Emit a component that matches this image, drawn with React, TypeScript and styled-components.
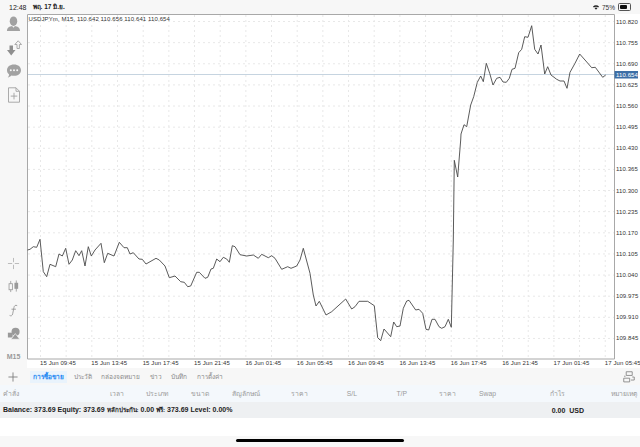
import React from 'react';
import styled, { createGlobalStyle } from 'styled-components';

const GlobalStyle = createGlobalStyle`
    html, body {
        margin: 0;
        padding: 0;
        background: #ffffff;
    }
    body {
        font-family: "Liberation Sans", "Noto Sans", sans-serif;
    }
`

const PRICE_LABELS = ['110.820', '110.755', '110.690', '110.625', '110.560', '110.495', '110.430', '110.365', '110.300', '110.235', '110.170', '110.105', '110.040', '109.975', '109.910', '109.845']
const TIME_LABELS = ['15 Jun 09:45', '15 Jun 13:45', '15 Jun 17:45', '15 Jun 21:45', '16 Jun 01:45', '16 Jun 05:45', '16 Jun 09:45', '16 Jun 13:45', '16 Jun 17:45', '16 Jun 21:45', '17 Jun 01:45', '17 Jun 05:45']
const TABS = ['การซื้อขาย', 'ประวัติ', 'กล่องจดหมาย', 'ข่าว', 'บันทึก', 'การตั้งค่า']
const COLUMNS = ['คำสั่ง', 'เวลา', 'ประเภท', 'ขนาด', 'สัญลักษณ์', 'ราคา', 'S/L', 'T/P', 'ราคา', 'Swap', 'กำไร', 'หมายเหตุ']

// page coordinates, the svg viewBox starts at the chart corner
const LINE = `27.5,250 30,249.3 33.3,246.7 36.7,247.3 40,239.3 43.3,271.7 46.7,276.7 50,264.3 55.7,266.7 59,254 62.3,256 65.7,248.3 69,264.3 72.3,260 75.7,250.7 79,255.7 81.7,250.7 85,266 88.3,246.7 91.3,256 95,250 101,243.3 104.3,262.7 107.7,253.3 114,256 119.3,242.3 124,247.7 127.3,247.7 130,254 133.3,252.7 139,259 142.3,259.3 146,264 156,258.3 159.3,260 165,266 169.3,277.7 175,276 180.7,281.7 184.3,282.3 187.7,286.7 190.7,286 196.7,272.3 199.3,272.3 205,278.3 207.7,277.3 211,269 213.3,268.3 216.7,259 220,261.7 223.3,257.3 226.7,259 229.3,262.3 232.3,245.7 235,246.7 240,254.7 246.7,256 253.3,255 258.3,258.3 261.7,254.3 268.3,257.7 271.7,255.7 275,258.3 281.7,269.3 287.7,266.7 291,268.3 296.7,266 300,260 303.3,248.3 310,273.3 313.3,295 316,306 319.3,301.3 326,315 331.7,311.7 345.7,299 351.7,309 355,306.7 359,301.3 367.7,301.3 374.3,305.7 377.7,337.7 380.7,340.7 384,329 390.7,336.7 393.7,322 396.7,326.7 400,326 403.3,308.3 406.7,301 409,300.3 415.7,310 419,309.3 422.7,313.3 426,329.3 428.7,330 432,319.3 435,319.3 439,326.7 441.7,328.3 445,326.7 448.3,319.3 451.3,327.3 453.3,240 454.3,160.3 457.7,177 460.7,140 461,134 464,124.7 466.7,126.7 470.7,105 473.7,96.7 477.3,82.3 480.7,76 483.3,81.7 486.3,63.3 489.7,73.3 493,85 496.7,78.3 500,77.3 503,82 506.3,82.3 509.3,78.3 512,69.3 515,68.3 518.7,52.7 521.7,49.3 524.7,36.7 528,37.3 531.7,25.7 534.7,49.3 538,54 541,45 544.7,74 547.7,66.7 551,75 556.7,79.3 560,81 564,81 567,88.3 570,72.3 575,63.3 579.7,54 585,60 591.7,67.7 595.3,67.3 602.7,77.3 605.7,75`

const App = () => {
    return (
        <>
            <GlobalStyle />
            <Screen>
                <StatusBar>
                    <StatusLeft>
                        <StatusTime>12:48</StatusTime>
                        <StatusDate>พฤ. 17 มิ.ย.</StatusDate>
                    </StatusLeft>
                    <StatusRight>
                        <svg width="6" height="5" viewBox="0 0 8 6">
                            <path d="M0 1.8 C2.2 -0.4 5.8 -0.4 8 1.8 L6.9 3 C5.3 1.5 2.7 1.5 1.1 3 Z M2 3.8 C3.2 2.8 4.8 2.8 6 3.8 L4 6 Z" fill="#222" />
                        </svg>
                        <span>75%</span>
                        <Battery><BatteryLevel style={{ width: '75%' }} /></Battery>
                    </StatusRight>
                </StatusBar>
                <Workspace>
                    <Sidebar>
                        <SideGroup>
                            <SideIcon>
                                <svg width="15" height="16" viewBox="0 0 16 16">
                                    <ellipse cx="8" cy="5" rx="4" ry="5" fill="#a2a2a2" />
                                    <path d="M1 15.5 C1 11.5 4 10.5 6.5 10 L8 12 L9.5 10 C12 10.5 15 11.5 15 15.5 Z" fill="#a2a2a2" />
                                </svg>
                            </SideIcon>
                            <SideIcon>
                                <svg width="16" height="16" viewBox="0 0 16 16">
                                    <path d="M3.5 5.5 H7 V10 H9.5 L5.2 15.5 L1 10 H3.5 Z" fill="#8f8f8f" />
                                    <path d="M11 8.5 V4.5 H8.8 L12.2 0.8 L15.5 4.5 H13.4 V8.5 Z" fill="none" stroke="#a2a2a2" strokeWidth="0.9" />
                                </svg>
                            </SideIcon>
                            <SideIcon>
                                <svg width="16" height="16" viewBox="0 0 16 16">
                                    <path d="M8 1.5 C12.2 1.5 15 3.9 15 7.2 C15 10.5 12.2 12.8 8 12.8 C7 12.8 6.2 12.7 5.4 12.5 C4.4 13.6 3 14.4 1.8 14.4 C2.7 13.4 3.1 12.4 3.1 11.4 C1.8 10.4 1 9 1 7.2 C1 3.9 3.8 1.5 8 1.5 Z" fill="#a2a2a2" />
                                    <circle cx="4.8" cy="7.2" r="1" fill="#f7f7f7" />
                                    <circle cx="8" cy="7.2" r="1" fill="#f7f7f7" />
                                    <circle cx="11.2" cy="7.2" r="1" fill="#f7f7f7" />
                                </svg>
                            </SideIcon>
                            <SideIcon>
                                <svg width="16" height="16" viewBox="0 0 16 16">
                                    <path d="M2.5 0.8 H10 L13.5 4.3 V15.2 H2.5 Z M10 0.8 V4.3 H13.5" fill="none" stroke="#a2a2a2" strokeWidth="0.9" />
                                    <path d="M8 5.8 V12.4 M4.7 9.1 H11.3" stroke="#a2a2a2" strokeWidth="0.9" />
                                </svg>
                            </SideIcon>
                        </SideGroup>
                        <SideGroup>
                            <SideIcon>
                                <svg width="13" height="13" viewBox="0 0 14 14">
                                    <path d="M7 1 V5.6 M7 8.4 V13 M1 7 H5.6 M8.4 7 H13" stroke="#b0b0b0" strokeWidth="0.9" />
                                </svg>
                            </SideIcon>
                            <SideIcon>
                                <svg width="13" height="13" viewBox="0 0 14 14">
                                    <path d="M4 1 V13 M10 0.5 V12.5" stroke="#9a9a9a" strokeWidth="0.9" />
                                    <rect x="2.2" y="4" width="3.6" height="6.5" fill="#f7f7f7" stroke="#9a9a9a" strokeWidth="0.9" />
                                    <rect x="8" y="3" width="4" height="6.5" fill="#9a9a9a" />
                                </svg>
                            </SideIcon>
                            <SideIcon>
                                <svg width="13" height="13" viewBox="0 0 14 14">
                                    <path d="M11 1.8 C9.2 0.8 7.9 1.6 7.5 3.8 L6.1 10.6 C5.7 12.6 4.4 13.2 2.8 12.3 M4.8 5.6 H9.6" fill="none" stroke="#9a9a9a" strokeWidth="1" />
                                </svg>
                            </SideIcon>
                            <SideIcon>
                                <svg width="14" height="14" viewBox="0 0 16 16">
                                    <rect x="1" y="6.5" width="5.5" height="5.5" fill="#9a9a9a" />
                                    <circle cx="9.8" cy="5.5" r="4.6" fill="#9a9a9a" />
                                    <path d="M9.5 7.5 L14.5 14 H4.5 Z" fill="#9a9a9a" stroke="#f7f7f7" strokeWidth="0.8" />
                                </svg>
                            </SideIcon>
                            <TimeFrame>M15</TimeFrame>
                        </SideGroup>
                    </Sidebar>
                    <PriceChart />
                </Workspace>
                <TabBar>
                    <AddButton>
                        <svg width="10" height="10" viewBox="0 0 12 12">
                            <path d="M6 0.5 V11.5 M0.5 6 H11.5" stroke="#777" strokeWidth="1" />
                        </svg>
                    </AddButton>
                    <Tabs>
                        {TABS.map((t, i) => (
                            <Tab key={t} $active={i === 0}>{t}</Tab>
                        ))}
                    </Tabs>
                    <LayoutButton>
                        <svg width="12" height="12" viewBox="0 0 13 13">
                            <path d="M3.5 0.8 H10 V4.8 H3.5 Z M0.8 7.8 H7.2 V11.8 H0.8 Z M10 6.5 H12.2 V9.8 H8.5 M2 6.5 V5" fill="none" stroke="#808080" strokeWidth="0.9" />
                        </svg>
                    </LayoutButton>
                </TabBar>
                <ColumnRow>
                    {COLUMNS.map((c, i) => (
                        <ColumnCell key={c + i} $first={i === 0}>{c}</ColumnCell>
                    ))}
                </ColumnRow>
                <BalanceRow>
                    <span>Balance: 373.69 Equity: 373.69 <ThaiWord>หลักประกัน:</ThaiWord> 0.00 <ThaiWord>ฟรี:</ThaiWord> 373.69 Level: 0.00%</span>
                    <BalanceTotal>0.00&nbsp; USD</BalanceTotal>
                </BalanceRow>
                <EmptyArea />
                <HomeArea>
                    <HomeIndicator />
                </HomeArea>
            </Screen>
        </>
    )
}

const PriceChart = () => {
    const verticals = Array.from({ length: 23 }, (_, i) => 40.5 + i * 25.67)
    const horizontals = PRICE_LABELS.map((_, i) => 21.5 + i * 21.13)
    return (
        <ChartSvg viewBox="27 14 613 354">
            {verticals.map((x) => (
                <GridLine key={x} x1={x} x2={x} y1={15} y2={359} />
            ))}
            {horizontals.map((y) => (
                <GridLine key={y} x1={28} x2={614} y1={y} y2={y} />
            ))}
            <path d="M27.5 359 V14.5 H614.5 V359 Z" fill="none" stroke="#a8a8a8" strokeWidth="1" />
            <line x1="28" x2="614" y1="74.5" y2="74.5" stroke="#c6d4e0" strokeWidth="1" />
            <polyline points={LINE} fill="none" stroke="#484848" strokeWidth="0.9" strokeLinejoin="round" />
            <ChartText x={28.5} y={20.5}>USDJPYm, M15, 110.642 110.656 110.641 110.654</ChartText>
            {PRICE_LABELS.map((p, i) => (
                <ChartText key={p} x={616} y={horizontals[i] + 2}>{p}</ChartText>
            ))}
            <rect x="614.5" y="71" width="23.5" height="7.5" fill="#3c6ea6" />
            <ChartText x={616} y={76.8} fill="#ffffff">110.654</ChartText>
            {TIME_LABELS.map((t, i) => (
                <ChartText key={t} x={40 + i * 51.35} y={365}>{t}</ChartText>
            ))}
        </ChartSvg>
    )
}

const Screen = styled.div`
    width: 640px;
    height: 447px;
    display: flex;
    flex-direction: column;
    overflow: hidden;
    background-color: #ffffff;
`
const StatusBar = styled.div`
    height: 14px;
    display: flex;
    align-items: center;
    justify-content: space-between;
    padding: 0 9px 0 9px;
    background-color: #f7f7f7;
    color: #222222;
    font-size: 7px;
`
const StatusLeft = styled.div`
    display: flex;
    align-items: center;
    gap: 6px;
`
const StatusTime = styled.span`
    font-size: 7px;
`
const StatusDate = styled.span`
    font-size: 6.5px;
    font-weight: bold;
`
const StatusRight = styled.div`
    display: flex;
    align-items: center;
    gap: 3px;
    font-size: 6.5px;
    color: #333333;
`
const Battery = styled.div`
    width: 10px;
    height: 4.5px;
    padding: 0.5px;
    border: 0.5px solid #555555;
    border-radius: 1.5px;
`
const BatteryLevel = styled.div`
    height: 100%;
    background-color: #111111;
    border-radius: 1px;
`
const Workspace = styled.div`
    height: 354px;
    display: flex;
`
const Sidebar = styled.div`
    width: 27px;
    box-sizing: border-box;
    display: flex;
    flex-direction: column;
    justify-content: space-between;
    padding: 0 0 8px;
    background-color: #f7f7f7;
`
const SideGroup = styled.div`
    display: flex;
    flex-direction: column;
    align-items: center;
    gap: 3.5px;
`
const SideIcon = styled.div`
    height: 20px;
    display: flex;
    align-items: center;
    justify-content: center;
`
const TimeFrame = styled.div`
    margin-top: 6px;
    color: #9a9a9a;
    font-size: 7px;
    font-weight: bold;
`
const ChartSvg = styled.svg`
    width: 613px;
    height: 354px;
    display: block;
    flex: none;
`
const GridLine = styled.line`
    stroke: #e8e8e8;
    stroke-width: 1;
    stroke-dasharray: 2 3;
`
const ChartText = styled.text`
    font-size: 6px;
    fill: ${(props) => props.fill || '#333333'};
    letter-spacing: 0.1px;
`
const TabBar = styled.div`
    height: 17px;
    display: flex;
    align-items: center;
    background-color: #f7f7f7;
`
const AddButton = styled.div`
    width: 30px;
    flex: none;
    box-sizing: border-box;
    padding-left: 8px;
    display: flex;
`
const Tabs = styled.div`
    flex: 1;
    display: flex;
    align-items: center;
    gap: 3.5px;
`
const Tab = styled.div<{ $active: boolean }>`
    padding: 1px 3px;
    font-size: 6.5px;
    font-weight: ${(props) => (props.$active ? 'bold' : 'normal')};
    color: ${(props) => (props.$active ? '#1a86f2' : '#8a8a8a')};
    background-color: ${(props) => (props.$active ? '#e9f3fc' : 'transparent')};
`
const LayoutButton = styled.div`
    display: flex;
    padding-right: 5px;
`
const ColumnRow = styled.div`
    height: 17px;
    display: grid;
    grid-template-columns: 60px 64px 44px 41px 51px 48px 49px 50px 49px 40px 69px 72px;
    align-items: center;
    background-color: #f4f8fc;
    color: #9a9a9a;
    font-size: 6.8px;
`
const ColumnCell = styled.div<{ $first: boolean }>`
    text-align: ${(props) => (props.$first ? 'left' : 'right')};
    padding-left: ${(props) => (props.$first ? '3px' : '0')};
`
const BalanceRow = styled.div`
    height: 16px;
    display: flex;
    align-items: center;
    justify-content: space-between;
    padding: 0 56px 0 3px;
    background-color: #eef0f2;
    color: #222222;
    font-size: 7px;
    font-weight: bold;
`
const ThaiWord = styled.span`
    font-size: 6.2px;
`
const BalanceTotal = styled.span`
    font-size: 7px;
`
const EmptyArea = styled.div`
    height: 18px;
`
const HomeArea = styled.div`
    flex: 1;
    display: flex;
    justify-content: center;
    padding-top: 3px;
    background-color: #f7f7f7;
`
const HomeIndicator = styled.div`
    width: 168px;
    height: 3px;
    border-radius: 2px;
    background-color: #000000;
`

export default App
